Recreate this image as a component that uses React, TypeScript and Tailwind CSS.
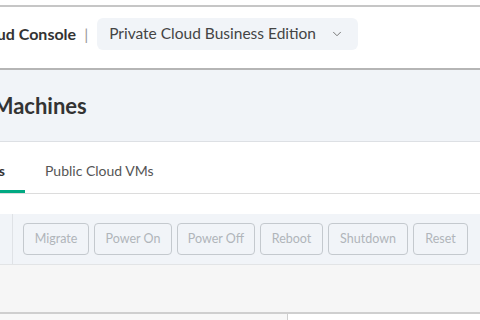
import { ChevronDown } from 'lucide-react'

const actions = [
  { label: 'Migrate', w: 'w-[66px]' },
  { label: 'Power On', w: 'w-[78px]' },
  { label: 'Power Off', w: 'w-[78px]' },
  { label: 'Reboot', w: 'w-[63px]' },
  { label: 'Shutdown', w: 'w-[80px]' },
  { label: 'Reset', w: 'w-[55px]' },
]

export default function App() {
  return (
    <div className="w-[480px] h-[320px] overflow-hidden bg-white font-['Lato',sans-serif]">
      {/* Top rule */}
      <div className="h-[5px] bg-white" />
      <div className="h-[2px] bg-[#c6c6c6]" />

      {/* Header */}
      <div className="h-[61px] flex items-start pt-[11px] whitespace-nowrap">
        <div className="h-[32px] flex items-center">
          <span className="-ml-[27px] text-[16px] font-bold text-[#333]">Cloud Console</span>
          <span className="ml-[8px] text-[16px] text-[#999]">|</span>
        </div>
        <button className="ml-[9px] h-[32px] w-[261px] flex items-center justify-between pl-3 pr-[14px] rounded-md bg-[#f1f4f8] text-[15.5px] text-[#444]">
          <span>Private Cloud Business Edition</span>
          <ChevronDown className="w-[14px] h-[14px] text-[#666]" strokeWidth={1.5} />
        </button>
      </div>
      <div className="h-[2px] bg-[#b5b5b5]" />

      {/* Page title */}
      <div className="h-[72px] bg-[#f1f4f8] border-b border-[#dde0e4] flex items-center whitespace-nowrap">
        <h1 className="-ml-[79px] text-[22px] font-bold text-[#333]">Virtual Machines</h1>
      </div>

      {/* Tabs */}
      <div className="h-[52px] flex items-stretch border-b border-[#dcdcdc] whitespace-nowrap">
        <div className="relative flex items-center pt-[6px] -ml-[131px] px-5 text-[14px] font-bold text-[#333]">
          Private Cloud VMs
          <div className="absolute left-0 right-0 bottom-0 h-[3px] bg-[#01a982]" />
        </div>
        <div className="flex items-center pt-[6px] px-5 text-[14px] text-[#555]">Public Cloud VMs</div>
      </div>

      <div className="h-[20px]" />

      {/* Toolbar */}
      <div className="h-[51px] flex bg-[#f1f4f8] border-b border-[#e2e4e6]">
        <div className="w-[13px] border-r border-[#dfe2e6]" />
        <div className="flex items-center gap-[5px] pl-[10px]">
          {actions.map((a) => (
            <button
              key={a.label}
              disabled
              className={`${a.w} h-[32px] rounded border border-[#c4c9ce] text-[12.5px] text-[#b0b5ba]`}
            >
              {a.label}
            </button>
          ))}
        </div>
      </div>

      {/* Table area */}
      <div className="h-[47px] bg-[#f6f6f6]" />
      <div className="h-[2px] bg-[#cfcfcf]" />
      <div className="h-[10px] flex">
        <div className="w-[288px] bg-[#f8f8f8] border-r border-[#cfcfcf]" />
        <div className="flex-1 bg-white" />
      </div>
    </div>
  )
}
